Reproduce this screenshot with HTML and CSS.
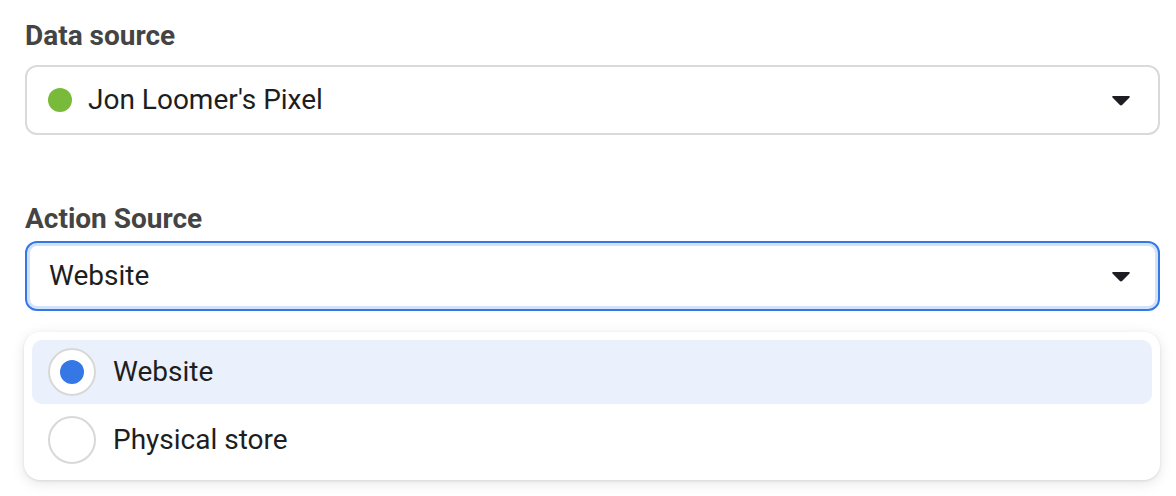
FILE: index.html
```html
<!DOCTYPE html>
<html>
<head>
<meta charset="utf-8">
<link rel="stylesheet" href="styles.css">
</head>
<body>
<div class="panel">
  <div class="label first">Data source</div>
  <div class="select">
    <span class="dot"></span>
    <span class="value">Jon Loomer's Pixel</span>
    <svg class="caret" width="18" height="11" viewBox="0 0 18 11"><path d="M1.2 1h15.6c.9 0 1.3 1 .7 1.6l-7.4 7.4c-.6.6-1.6.6-2.2 0L.5 2.6C-.1 2 .3 1 1.2 1z" fill="#1c1e21"/></svg>
  </div>
  <div class="label second">Action Source</div>
  <div class="select focused">
    <span class="value">Website</span>
    <svg class="caret" width="18" height="11" viewBox="0 0 18 11"><path d="M1.2 1h15.6c.9 0 1.3 1 .7 1.6l-7.4 7.4c-.6.6-1.6.6-2.2 0L.5 2.6C-.1 2 .3 1 1.2 1z" fill="#1c1e21"/></svg>
  </div>
  <div class="menu">
    <div class="option active">
      <span class="radio checked"></span>
      <span class="opt-text">Website</span>
    </div>
    <div class="option">
      <span class="radio"></span>
      <span class="opt-text">Physical store</span>
    </div>
  </div>
</div>
</body>
</html>
```

FILE: styles.css
```css
html, body {
  margin: 0;
  padding: 0;
  background: #ffffff;
}
body {
  font-family: Roboto, "Liberation Sans", Arial, sans-serif;
  color: #1c1e21;
  min-height: 496px;
  overflow: hidden;
}
.panel {
  width: 1135px;
  padding: 20px 0 16px 25px;
  display: flex;
  flex-direction: column;
}
.label {
  font-size: 28px;
  line-height: 32px;
  font-weight: 700;
  color: #444444;
  height: 32px;
}
.label.first {
  margin-bottom: 13px;
}
.label.second {
  margin-top: 68px;
  margin-bottom: 6px;
}
.select {
  box-sizing: border-box;
  height: 70px;
  border: 2px solid #dadada;
  border-radius: 12px;
  display: flex;
  align-items: center;
  padding: 0 28px 0 21px;
  background: #fff;
}
.select.focused {
  border-color: #3578e5;
  box-shadow: inset 0 0 0 3px #d3e2fb;
  padding-left: 22px;
}
.dot {
  width: 24px;
  height: 24px;
  border-radius: 50%;
  background: #7aba3a;
  margin-right: 16px;
  flex: none;
}
.value {
  font-size: 28px;
  line-height: 32px;
  flex: 1;
}
.caret {
  flex: none;
  display: block;
}
.menu {
  margin-top: 21px;
  margin-left: -1px;
  width: 1136px;
  box-sizing: border-box;
  background: #fff;
  border-radius: 16px;
  padding: 8px;
  display: flex;
  flex-direction: column;
  gap: 4px;
  box-shadow: 0 3px 14px rgba(0, 0, 0, 0.10), 0 1px 3px rgba(0, 0, 0, 0.10);
}
.option {
  height: 64px;
  border-radius: 10px;
  display: flex;
  align-items: center;
  padding-left: 16px;
}
.option.active {
  background: #ebf1fc;
}
.radio {
  box-sizing: border-box;
  width: 48px;
  height: 48px;
  border-radius: 50%;
  border: 2px solid #d8d8d8;
  background: #fff;
  display: flex;
  align-items: center;
  justify-content: center;
  margin-right: 17px;
  flex: none;
}
.radio.checked::after {
  content: "";
  width: 24px;
  height: 24px;
  border-radius: 50%;
  background: #3578e5;
}
.opt-text {
  font-size: 28px;
  line-height: 32px;
}
```
